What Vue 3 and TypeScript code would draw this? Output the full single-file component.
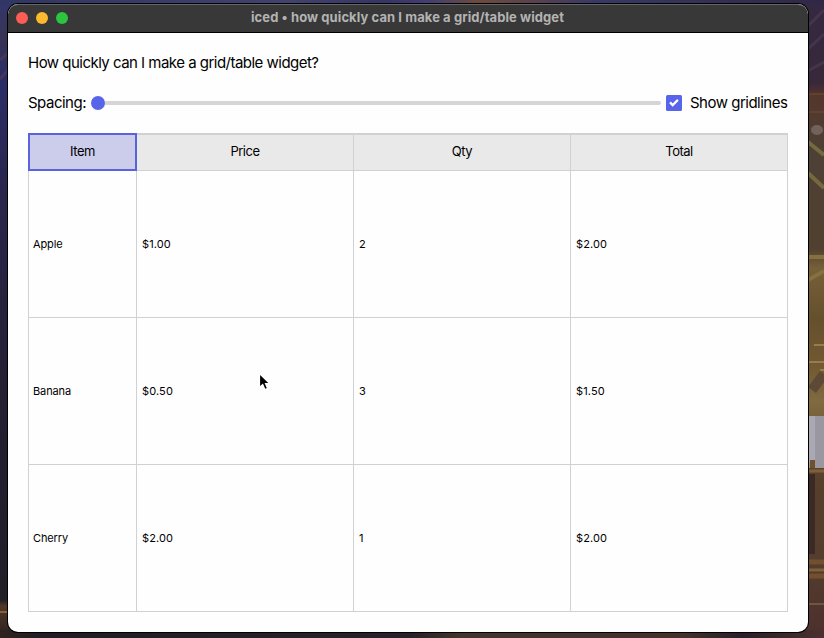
<script setup lang="ts">
import { ref } from 'vue'

interface Product {
  name: string
  price: string
  qty: number
  total: string
}

const headers: string[] = ['Item', 'Price', 'Qty', 'Total']
const products: Product[] = [
  { name: 'Apple', price: '$1.00', qty: 2, total: '$2.00' },
  { name: 'Banana', price: '$0.50', qty: 3, total: '$1.50' },
  { name: 'Cherry', price: '$2.00', qty: 1, total: '$2.00' },
]
const selected = ref(0)
const gridlines = ref(true)
</script>

<template>
  <div class="desktop">
    <svg class="wallpaper" width="824" height="638" viewBox="0 0 824 638" aria-hidden="true">
      <defs>
        <linearGradient id="left" x1="0" y1="0" x2="0" y2="1">
          <stop offset="0" stop-color="#33366f" />
          <stop offset=".06" stop-color="#373453" />
          <stop offset=".12" stop-color="#2b2d69" />
          <stop offset=".3" stop-color="#29264d" />
          <stop offset=".6" stop-color="#252033" />
          <stop offset=".94" stop-color="#211e28" />
          <stop offset=".95" stop-color="#513827" />
          <stop offset="1" stop-color="#28201f" />
        </linearGradient>
        <linearGradient id="right" x1="0" y1="0" x2="0" y2="1">
          <stop offset="0" stop-color="#342943" />
          <stop offset=".13" stop-color="#382838" />
          <stop offset=".15" stop-color="#54362c" />
          <stop offset=".24" stop-color="#4d4035" />
          <stop offset=".39" stop-color="#51402f" />
          <stop offset=".42" stop-color="#766039" />
          <stop offset=".5" stop-color="#65502d" />
          <stop offset=".57" stop-color="#715832" />
          <stop offset=".63" stop-color="#806a40" />
          <stop offset=".75" stop-color="#563f2b" />
          <stop offset=".88" stop-color="#543d2d" />
          <stop offset="1" stop-color="#4c2f2d" />
        </linearGradient>
        <linearGradient id="top">
          <stop offset="0" stop-color="#303663" />
          <stop offset=".35" stop-color="#41426d" />
          <stop offset=".47" stop-color="#373466" />
          <stop offset=".52" stop-color="#423d73" />
          <stop offset=".58" stop-color="#6c4b3c" />
          <stop offset=".65" stop-color="#5a4050" />
          <stop offset=".72" stop-color="#373965" />
          <stop offset="1" stop-color="#312745" />
        </linearGradient>
        <linearGradient id="bottom">
          <stop offset="0" stop-color="#30231f" />
          <stop offset=".05" stop-color="#211d25" />
          <stop offset=".5" stop-color="#29212a" />
          <stop offset=".56" stop-color="#44342d" />
          <stop offset=".83" stop-color="#44322b" />
          <stop offset=".9" stop-color="#28202a" />
          <stop offset="1" stop-color="#4c302f" />
        </linearGradient>
      </defs>
      <rect width="412" height="638" fill="url(#left)" />
      <rect x="412" width="412" height="638" fill="url(#right)" />
      <rect width="824" height="5" fill="url(#top)" />
      <rect y="630" width="824" height="8" fill="url(#bottom)" />
      <g fill="none">
        <path d="M0 79 8 70M0 60 8 53" stroke="#43385a" stroke-width="3" />
        <path d="M0 612h8" stroke="#8a6034" stroke-width="2" />
        <path d="M806 28 824 10M806 51 824 34M806 72 824 62" stroke="#43354b" stroke-width="3" />
        <path d="M808 94h16M808 112h16" stroke="#64402f" stroke-width="2" />
        <path d="M808 142 824 155M808 173 824 188" stroke="#75693f" stroke-width="4" />
        <path d="M808 257h16M808 280 824 271" stroke="#86703f" stroke-width="4" />
        <path d="M808 362h16M814 345h10M820 370h4" stroke="#9a7c48" stroke-width="2" />
        <path d="M812 390 824 374" stroke="#5d4935" stroke-width="10" />
        <path d="M808 471h16M808 570h16" stroke="#806039" stroke-width="3" />
        <path d="M808 562h16M808 576h16" stroke="#70502f" stroke-width="5" />
        <path d="M808 604h16" stroke="#8d7b59" stroke-width="1" />
        <path d="M812 474v80" stroke="#3b2a24" stroke-width="6" />
      </g>
      <ellipse cx="817" cy="130" rx="6" ry="5" fill="#70635c" />
      <path d="M808 416h16v52h-16z" fill="#9997a0" />
      <path d="M808 416h7v46h-7z" fill="#aaa8b2" />
      <path d="M810 460h5v8h-5z" fill="#71512c" />
    </svg>

    <main class="window">
      <header class="titlebar">
        <span class="light close"></span>
        <span class="light minimize"></span>
        <span class="light zoom"></span>
        <h1>iced • how quickly can I make a grid/table widget</h1>
      </header>
      <section class="content">
        <p class="heading"><span>How quickly can I make a grid/table widget?</span></p>
        <div class="controls">
          <span class="label spacing">Spacing:</span>
          <div class="slider"><span class="knob"></span><span class="rail"></span></div>
          <button class="checkbox" @click="gridlines = !gridlines">
            <svg class="box" width="16" height="16" viewBox="0 0 16 16">
              <rect width="16" height="16" rx="1.5" fill="#5865ea" />
              <path v-if="gridlines" d="m4 7.4 2.7 2.7 5.2-5.2" fill="none" stroke="#fff" stroke-width="2.2" />
            </svg>
            <span class="label">Show gridlines</span>
          </button>
        </div>
        <div class="grid" :class="{ lined: gridlines }">
          <div
            v-for="(title, i) in headers"
            :key="title"
            class="cell head"
            :class="{ selected: selected === i }"
            @click="selected = i"
          >
            <span>{{ title }}</span>
          </div>
          <template v-for="product in products" :key="product.name">
            <div class="cell first"><span>{{ product.name }}</span></div>
            <div class="cell"><span>{{ product.price }}</span></div>
            <div class="cell"><span>{{ product.qty }}</span></div>
            <div class="cell"><span>{{ product.total }}</span></div>
          </template>
        </div>
      </section>
    </main>

    <svg class="pointer" width="14" height="20" viewBox="0 0 14 20" aria-hidden="true">
      <path d="M1.5 1.5v14l3.2-2.9 2.2 5 2.7-1.2-2.1-4.8h4.2z" fill="#000" stroke="#fff" stroke-width="1.2" />
    </svg>
  </div>
</template>

<style>
body {
  margin: 0;
  overflow: hidden;
}
</style>

<style scoped>
.desktop {
  position: relative;
  box-sizing: border-box;
  width: 824px;
  height: 638px;
  padding: 4px 16px 6px 8px;
  overflow: hidden;
  font-family: Inter, "Liberation Sans", sans-serif;
  color: #000;
}
.wallpaper {
  position: absolute;
  inset: 0;
}
.window {
  position: relative;
  display: flex;
  flex-direction: column;
  height: 628px;
  overflow: hidden;
  border-radius: 10px;
  background: #fefefe;
  box-shadow: 0 0 0 1px #000;
}
.titlebar {
  display: flex;
  align-items: center;
  gap: 8px;
  box-sizing: border-box;
  height: 29px;
  padding: 0 8px 1px;
  border-top: 1px solid #666;
  border-bottom: 1px solid #000;
  border-radius: 10px 10px 0 0;
  background: #383838;
}
.light {
  width: 12px;
  height: 12px;
  border-radius: 50%;
}
.close { background: #fb5d55; }
.minimize { background: #fbb92e; }
.zoom { background: #2bc53f; }
h1 {
  margin: 0 0 0 175px;
  padding-bottom: 2px;
  font-size: 13px;
  line-height: 16px;
  font-weight: 700;
  letter-spacing: 0.08px;
  white-space: nowrap;
  color: #b3b3b3;
}
.content {
  display: flex;
  flex-direction: column;
  padding: 20px;
}
.heading {
  margin: 0;
  font-size: 15px;
  line-height: 20px;
  letter-spacing: -0.52px;
}
.controls {
  display: flex;
  align-items: center;
  height: 20px;
  margin: 20px 0;
  font-size: 15px;
  letter-spacing: -0.5px;
}
.label {
  padding-bottom: 1px;
  line-height: 19px;
}
.spacing {
  width: 63px;
}
.slider {
  display: flex;
  flex: 1;
  align-items: center;
}
.knob {
  width: 14px;
  height: 14px;
  border-radius: 50%;
  background: #5865ea;
}
.rail {
  flex: 1;
  height: 4px;
  border-radius: 0 2px 2px 0;
  background: #d5d5d5;
}
.checkbox {
  display: flex;
  align-items: center;
  gap: 8px;
  box-sizing: border-box;
  width: 127px;
  padding: 0 0 0 5px;
  border: 0;
  background: none;
  font: inherit;
  letter-spacing: -0.5px;
  white-space: nowrap;
  color: inherit;
}
.box {
  flex: none;
}
.grid {
  display: grid;
  grid-template-columns: 109px 217px 217px 217px;
  grid-template-rows: 38px 147px 147px 147px;
  font-size: 11px;
}
.cell {
  display: flex;
  align-items: center;
  box-sizing: border-box;
  padding-left: 5px;
  border: 0 solid transparent;
  border-width: 0 1px 1px 0;
  letter-spacing: 0.12px;
}
.lined .cell {
  border-color: #d1d1d1;
}
.cell.first {
  padding-left: 4px;
  border-left-width: 1px;
  letter-spacing: -0.12px;
}
.cell.head {
  justify-content: center;
  padding: 0 0 3px;
  border-top-width: 2px;
  background: #e9e9e9;
  font-size: 13px;
  letter-spacing: -0.5px;
}
.lined .cell.head.selected {
  padding-bottom: 2px;
  border: 2px solid #5964dc;
  background: #cbcdea;
}
.pointer {
  position: absolute;
  left: 258px;
  top: 372px;
}
</style>
